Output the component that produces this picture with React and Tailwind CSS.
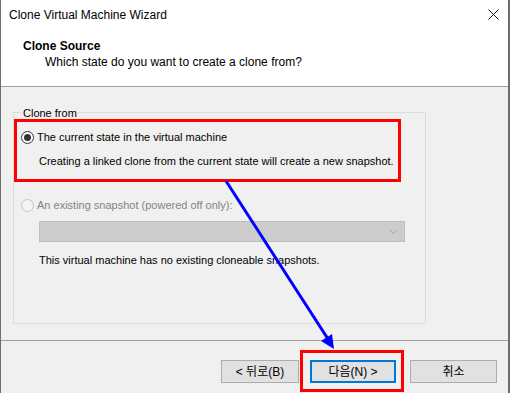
import React from "react";

const ui = { fontFamily: '"Liberation Sans", "Noto Sans CJK KR", sans-serif' };

function Radio({ checked, disabled }) {
  return (
    <span
      className={`flex h-[13px] w-[13px] shrink-0 items-center justify-center rounded-full border ${
        disabled ? "border-[#c4c4c4] bg-[#f4f4f4]" : "border-[#333333] bg-white"
      }`}
    >
      {checked && <span className="h-[7px] w-[7px] rounded-full bg-[#333333]" />}
    </span>
  );
}

function Button({ children, primary, width }) {
  return (
    <button
      className={`flex h-[23px] items-center justify-center bg-[#e1e1e1] text-[12px] text-black ${width} ${
        primary ? "border-2 border-[#0078d7]" : "border border-[#adadad]"
      }`}
    >
      {children}
    </button>
  );
}

export default function App() {
  return (
    <div
      className="relative h-[393px] w-[511px] overflow-hidden bg-white text-black"
      style={ui}
    >
      <div className="flex h-full w-[510px] flex-col border-l border-r-2 border-[#6e6e6e]">
        {/* title bar */}
        <div className="flex h-[29px] shrink-0 items-center justify-between pl-[8px] pr-[9px]">
          <span className="text-[12px]">Clone Virtual Machine Wizard</span>
          <svg width="11" height="11" viewBox="0 0 11 11" className="mb-[1px]">
            <path d="M0.5 0.5 L10.5 10.5 M10.5 0.5 L0.5 10.5" stroke="#111" strokeWidth="1" />
          </svg>
        </div>

        {/* header */}
        <div className="h-[58px] shrink-0 border-b border-[#a0a0a0] bg-white pt-[9px]">
          <div className="pl-[22px] text-[12px] font-bold leading-[16px]">Clone Source</div>
          <div className="pl-[44px] text-[12px] leading-[16px]">
            Which state do you want to create a clone from?
          </div>
        </div>

        {/* body */}
        <div className="h-[254px] shrink-0 border-b border-[#a0a0a0] bg-[#f0f0f0] pl-[12px] pt-[25px]">
          <div className="relative h-[212px] w-[413px] border border-[#dcdcdc] text-[11px]">
            <span className="absolute -top-[8px] left-[8px] bg-[#f0f0f0] px-[1px] leading-[16px]">
              Clone from
            </span>
            <div className="flex flex-col pl-[7px] pt-[16px]">
              <div className="flex h-[16px] items-center gap-[3px]">
                <Radio checked />
                <span>The current state in the virtual machine</span>
              </div>
              <div className="mt-[8px] h-[16px] pl-[18px] leading-[16px]">
                Creating a linked clone from the current state will create a new snapshot.
              </div>
              <div className="mt-[28px] flex h-[16px] items-center gap-[3px] text-[#838383]">
                <Radio disabled />
                <span>An existing snapshot (powered off only):</span>
              </div>
              <div className="ml-[18px] mt-[8px] flex h-[21px] w-[366px] items-center justify-end border border-[#bfbfbf] bg-[#cccccc] pr-[6px]">
                <svg width="9" height="5" viewBox="0 0 9 5">
                  <path d="M0.5 0.5 L4.5 4.5 L8.5 0.5" fill="none" stroke="#a4a4a4" strokeWidth="1" />
                </svg>
              </div>
              <div className="mt-[10px] h-[16px] pl-[18px] leading-[16px]">
                This virtual machine has no existing cloneable snapshots.
              </div>
            </div>
          </div>
        </div>

        {/* footer */}
        <div className="flex flex-1 items-start justify-end bg-[#f0f0f0] pr-[11px] pt-[19px]">
          <Button width="w-[78px]">&lt; 뒤로(B)</Button>
          <div className="ml-[11px]">
            <Button primary width="w-[86px]">다음(N) &gt;</Button>
          </div>
          <div className="ml-[14px]">
            <Button width="w-[87px]">취소</Button>
          </div>
        </div>
      </div>

      {/* annotations */}
      <div className="pointer-events-none absolute left-[14px] top-[119px] h-[63px] w-[387px] border-[3px] border-[#ff0000]" />
      <div className="pointer-events-none absolute left-[300px] top-[350px] h-[42px] w-[104px] border-[3px] border-[#ff0000]" />
      <svg
        className="pointer-events-none absolute left-0 top-0"
        width="511"
        height="393"
        viewBox="0 0 511 393"
      >
        <line x1="226" y1="181" x2="328" y2="339" stroke="#0000ff" strokeWidth="3" />
        <polygon points="334,349 321,341 332,334" fill="#0000ff" />
      </svg>
    </div>
  );
}
